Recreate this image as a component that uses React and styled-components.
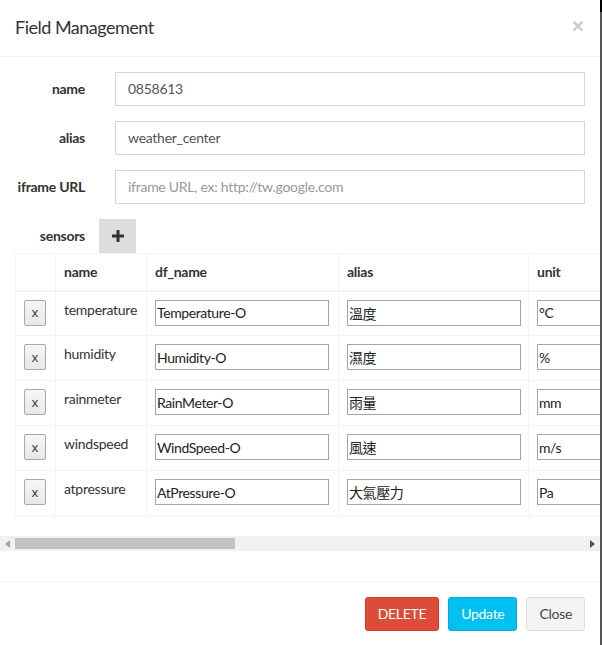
import React from "react";
import styled, { createGlobalStyle } from "styled-components";

const Global = createGlobalStyle`
  html, body { margin: 0; padding: 0; background: #fff; }
  body {
    font-family: Lato, "Noto Sans CJK TC", sans-serif;
    font-size: 14px;
    letter-spacing: -0.27px;
    color: #333;
  }
  * { box-sizing: border-box; }
`;

const Page = styled.div`
  display: flex;
  width: 602px;
  height: 645px;
  overflow: hidden;
`;

const Edge = styled.div`
  width: 2px;
  flex: none;
  background: linear-gradient(to bottom, #000 0 12px, #555 12px 100%);
`;

const Modal = styled.div`
  width: 600px;
  flex: none;
  background: #fff;
  display: flex;
  flex-direction: column;
`;

const Header = styled.div`
  display: flex;
  align-items: flex-start;
  justify-content: space-between;
  padding: 15px;
  border-bottom: 1px solid #f4f4f4;
`;

const Title = styled.h4`
  margin: 0;
  font-size: 18px;
  font-weight: 400;
  letter-spacing: -0.5px;
  line-height: 1.42857;
  color: #333;
`;

const CloseX = styled.button`
  border: 0;
  background: none;
  padding: 0;
  margin-top: 0;
  margin-right: 1px;
  font-size: 21px;
  font-weight: 700;
  line-height: 1;
  color: #000;
  opacity: 0.2;
  font-family: "Liberation Sans", Arial, sans-serif;
  cursor: pointer;
`;

const Body = styled.div`
  padding: 15px;
`;

const FormRow = styled.div`
  display: grid;
  grid-template-columns: 100px 1fr;
  align-items: center;
  margin: 0 -15px 15px;
`;

const Label = styled.label`
  font-weight: 700;
  text-align: right;
  white-space: nowrap;
  padding: 0 15px;
`;

const Field = styled.div`
  padding: 0 15px;
`;

const TextInput = styled.input`
  display: block;
  width: 100%;
  height: 34px;
  padding: 6px 12px;
  font-family: inherit;
  font-size: 14px;
  letter-spacing: -0.27px;
  color: #555;
  border: 1px solid #d2d6de;
  border-radius: 0;
  outline: none;
  &::placeholder { color: #999; }
`;

const SensorsBar = styled.div`
  display: flex;
  align-items: center;
`;

const SensorsLabel = styled.span`
  width: 70px;
  text-align: right;
  font-weight: 700;
`;

const AddButton = styled.button`
  margin-left: 14px;
  width: 37px;
  height: 34px;
  border: 0;
  border-radius: 0;
  background: #ddd;
  display: flex;
  align-items: center;
  justify-content: center;
  padding: 0;
`;

const TableWrap = styled.div`
  margin: 0 -15px;
  padding-left: 15px;
  overflow: hidden;
`;

const Table = styled.table`
  width: 1540px;
  table-layout: fixed;
  border-collapse: collapse;
  margin-bottom: 20px;
  td, th {
    border: 1px solid #f4f4f4;
    padding: 8px;
    text-align: left;
    vertical-align: top;
    line-height: 20px;
  }
  th { border-bottom-width: 2px; font-weight: 700; }
  td { height: 45px; }
`;

const ScrollBar = styled.div`
  display: flex;
  height: 15px;
  margin: 0 -15px 15px;
  background: #f1f1f1;
`;

const ScrollArrow = styled.div`
  width: 15px;
  flex: none;
  display: flex;
  align-items: center;
  justify-content: center;
`;

const ScrollTrack = styled.div`
  flex: 1;
  padding: 2px 0;
  display: flex;
`;

const ScrollThumb = styled.div`
  width: ${(p) => p.$width}px;
  background: #c1c1c1;
`;

const RemoveButton = styled.button`
  width: 22px;
  height: 26px;
  padding: 0;
  border: 1px solid #a9a9a9;
  border-radius: 2px;
  background: linear-gradient(#f6f6f6, #e8e8e8);
  font-family: "Open Sans", sans-serif;
  font-size: 13px;
  color: #333;
  line-height: 1;
`;

const CellInput = styled.input`
  display: block;
  width: 174px;
  height: 26px;
  padding: 1px 1px;
  border: 1px solid #a4a4a4;
  border-radius: 0;
  font-family: Lato, "Noto Sans CJK TC", sans-serif;
  font-size: 14px;
  letter-spacing: -0.4px;
  color: #222;
  outline: none;
`;

const Footer = styled.div`
  display: flex;
  justify-content: flex-end;
  gap: 9px;
  padding: 15px;
  border-top: 1px solid #f4f4f4;
`;

const Btn = styled.button`
  height: 34px;
  padding: 6px 12px;
  font-family: inherit;
  font-size: 14px;
  letter-spacing: -0.3px;
  line-height: 20px;
  border-radius: 3px;
  border: 1px solid ${(p) => p.$border};
  background: ${(p) => p.$bg};
  color: ${(p) => p.$color};
`;

const sensors = [
  ["temperature", "Temperature-O", "溫度", "°C"],
  ["humidity", "Humidity-O", "濕度", "%"],
  ["rainmeter", "RainMeter-O", "雨量", "mm"],
  ["windspeed", "WindSpeed-O", "風速", "m/s"],
  ["atpressure", "AtPressure-O", "大氣壓力", "Pa"],
];

const PlusIcon = () => (
  <svg width="12" height="12" viewBox="0 0 12 12">
    <rect x="4.5" y="0" width="3" height="12" fill="#333" />
    <rect x="0" y="4.5" width="12" height="3" fill="#333" />
  </svg>
);

const Triangle = ({ dir, color }) => (
  <svg width="5" height="8" viewBox="0 0 5 8">
    <polygon points={dir === "left" ? "0,4 5,0 5,8" : "5,4 0,0 0,8"} fill={color} />
  </svg>
);

export default function App() {
  return (
    <Page>
      <Global />
      <Modal>
        <Header>
          <Title>Field Management</Title>
          <CloseX>×</CloseX>
        </Header>
        <Body>
          <FormRow>
            <Label>name</Label>
            <Field><TextInput defaultValue="0858613" /></Field>
          </FormRow>
          <FormRow>
            <Label>alias</Label>
            <Field><TextInput defaultValue="weather_center" /></Field>
          </FormRow>
          <FormRow>
            <Label>iframe URL</Label>
            <Field><TextInput placeholder="iframe URL, ex: http://tw.google.com" /></Field>
          </FormRow>
          <SensorsBar>
            <SensorsLabel>sensors</SensorsLabel>
            <AddButton><PlusIcon /></AddButton>
          </SensorsBar>
          <TableWrap>
            <Table>
              <colgroup>
                <col style={{ width: 40 }} />
                <col style={{ width: 91 }} />
                <col style={{ width: 192 }} />
                <col style={{ width: 190 }} />
                <col />
              </colgroup>
              <thead>
                <tr>
                  <th></th>
                  <th>name</th>
                  <th>df_name</th>
                  <th>alias</th>
                  <th>unit</th>
                </tr>
              </thead>
              <tbody>
                {sensors.map(([n, df, alias, unit]) => (
                  <tr key={n}>
                    <td><RemoveButton>x</RemoveButton></td>
                    <td>{n}</td>
                    <td><CellInput defaultValue={df} /></td>
                    <td><CellInput defaultValue={alias} /></td>
                    <td><CellInput defaultValue={unit} /></td>
                  </tr>
                ))}
              </tbody>
            </Table>
          </TableWrap>
          <ScrollBar>
            <ScrollArrow><Triangle dir="left" color="#a3a3a3" /></ScrollArrow>
            <ScrollTrack><ScrollThumb $width={220} /></ScrollTrack>
            <ScrollArrow><Triangle dir="right" color="#505050" /></ScrollArrow>
          </ScrollBar>
        </Body>
        <Footer>
          <Btn $bg="#dd4b39" $border="#d73925" $color="#fff">DELETE</Btn>
          <Btn $bg="#00c0ef" $border="#00acd6" $color="#fff">Update</Btn>
          <Btn $bg="#f4f4f4" $border="#ddd" $color="#444">Close</Btn>
        </Footer>
      </Modal>
      <Edge />
    </Page>
  );
}
